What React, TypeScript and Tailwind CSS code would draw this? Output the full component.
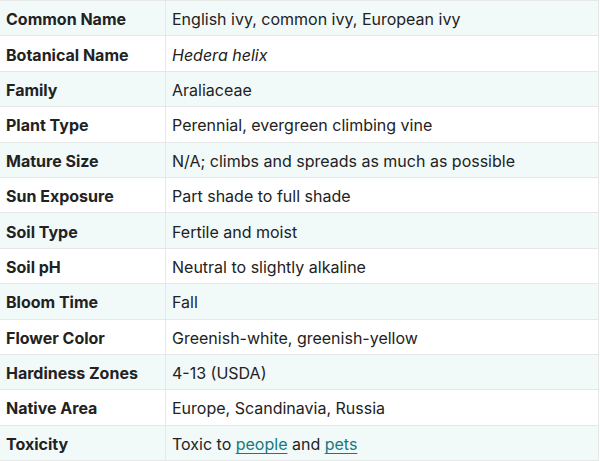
const ROWS: [string, React.ReactNode][] = [
  ["Common Name", "English ivy, common ivy, European ivy"],
  ["Botanical Name", <i>Hedera helix</i>],
  ["Family", "Araliaceae"],
  ["Plant Type", "Perennial, evergreen climbing vine"],
  ["Mature Size", "N/A; climbs and spreads as much as possible"],
  ["Sun Exposure", "Part shade to full shade"],
  ["Soil Type", "Fertile and moist"],
  ["Soil pH", "Neutral to slightly alkaline"],
  ["Bloom Time", "Fall"],
  ["Flower Color", "Greenish-white, greenish-yellow"],
  ["Hardiness Zones", "4-13 (USDA)"],
  ["Native Area", "Europe, Scandinavia, Russia"],
  [
    "Toxicity",
    <>
      Toxic to{" "}
      <a href="#" className="text-[#167a7e] underline underline-offset-[3px] decoration-[#167a7e]">
        people
      </a>{" "}
      and{" "}
      <a href="#" className="text-[#167a7e] underline underline-offset-[3px] decoration-[#167a7e]">
        pets
      </a>
    </>,
  ],
];

export default function App() {
  return (
    <div className="w-[600px] h-[461px] bg-white font-['Inter','Liberation_Sans',sans-serif] text-[#222]">
      <div className="w-[599px] border-t border-r border-[#e6e8e8]">
        {ROWS.map(([label, value], i) => (
          <div
            key={i}
            className={`flex h-[35.4px] border-b border-[#e6e8e8] ${i % 2 === 0 ? "bg-[#f1f9f9]" : "bg-white"}`}
          >
            <div className="w-[166px] shrink-0 border-r border-[#e6e8e8] pl-[6px] flex items-center pt-[2px] text-[16px] font-bold">
              <span>{label}</span>
            </div>
            <div className="pl-[6px] flex items-center pt-[2px] text-[16px]">
              <span>{value}</span>
            </div>
          </div>
        ))}
      </div>
    </div>
  );
}
